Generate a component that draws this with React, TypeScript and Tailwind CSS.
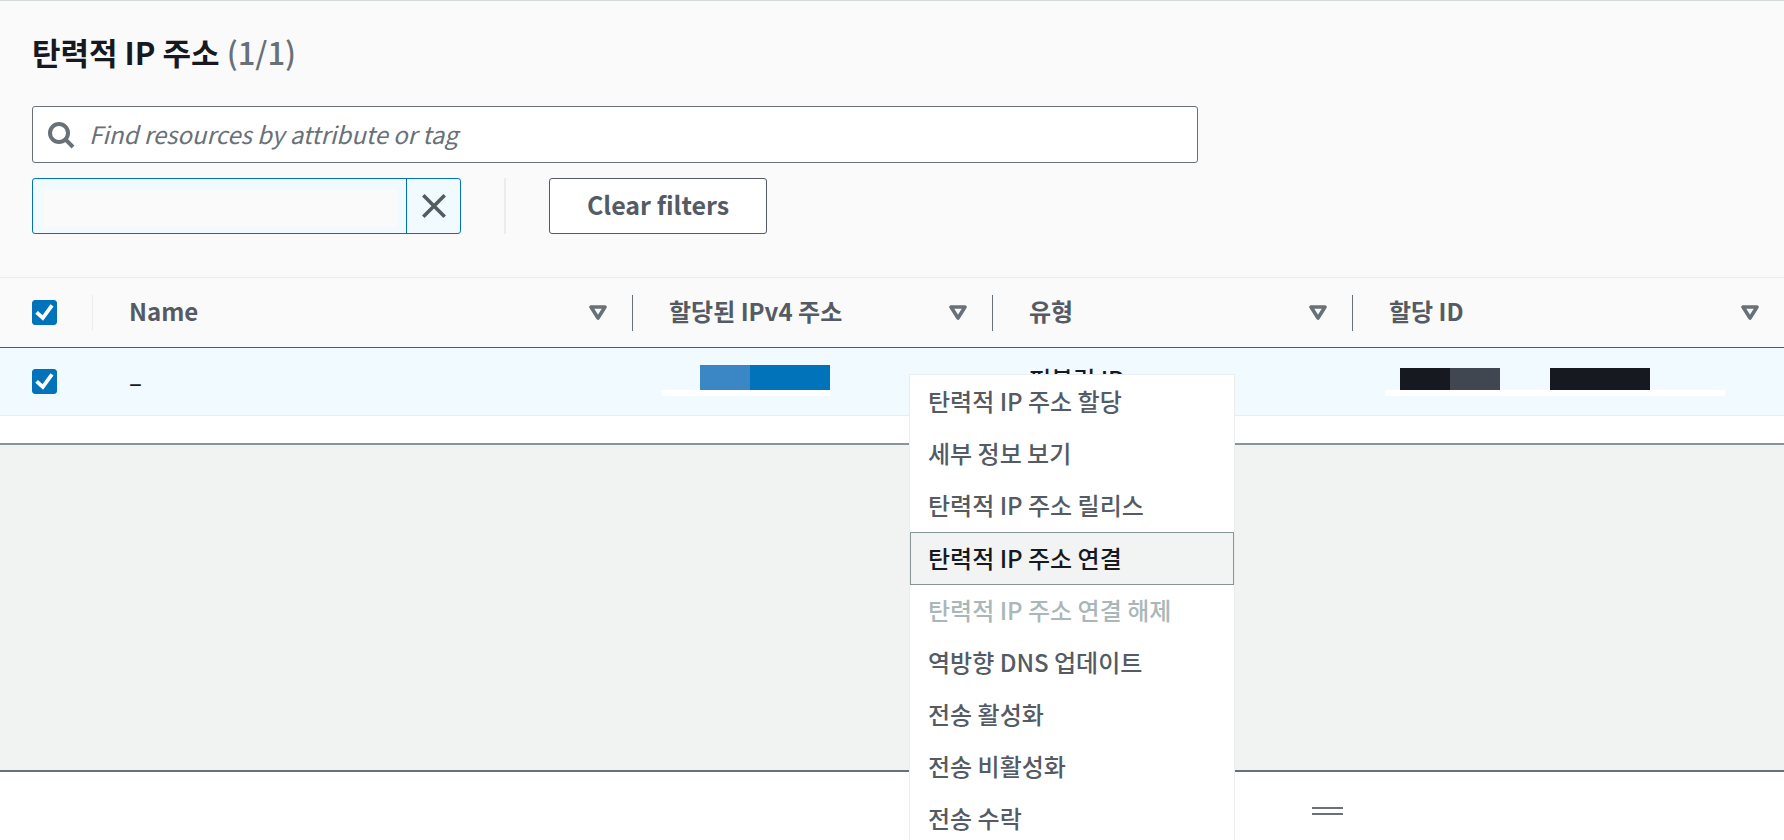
import React from "react";

const columns = ["Name", "할당된 IPv4 주소", "유형", "할당 ID"];

type MenuItem = { label: string; state?: "active" | "disabled" };

const menuItems: MenuItem[] = [
  { label: "탄력적 IP 주소 할당" },
  { label: "세부 정보 보기" },
  { label: "탄력적 IP 주소 릴리스" },
  { label: "탄력적 IP 주소 연결", state: "active" },
  { label: "탄력적 IP 주소 연결 해제", state: "disabled" },
  { label: "역방향 DNS 업데이트" },
  { label: "전송 활성화" },
  { label: "전송 비활성화" },
  { label: "전송 수락" },
];

function Checkbox({ label }: { label: string }) {
  return (
    <label className="grid size-[25px]">
      <input
        type="checkbox"
        defaultChecked
        aria-label={label}
        className="peer col-start-1 row-start-1 size-[25px] appearance-none rounded-[3px] border border-[#687078] bg-white checked:border-[#0073bb] checked:bg-[#0073bb]"
      />
      <svg
        viewBox="0 0 25 25"
        className="pointer-events-none invisible col-start-1 row-start-1 size-[25px] peer-checked:visible"
        fill="none"
        stroke="#fff"
        strokeWidth="3.8"
        aria-hidden="true"
      >
        <path d="M4.6 12.4 L10.8 18 L20 5.4" />
      </svg>
    </label>
  );
}

function SortIcon() {
  return (
    <svg viewBox="0 0 18 15" className="h-[15px] w-[18px]" fill="none" stroke="#687078" strokeWidth="3.6" strokeLinejoin="round" aria-hidden="true">
      <path d="M2 2 H16 L9 13 Z" />
    </svg>
  );
}

function HeaderCell({ title, last }: { title: string; last: boolean }) {
  return (
    <th scope="col" className="p-0 text-left font-bold">
      <div className={`flex h-9 items-center justify-between pl-9 pr-[25px] ${last ? "" : "border-r border-[#687078]"}`}>
        <span className="pb-[3px]">{title}</span>
        <button type="button" aria-label={`${title} 정렬`}>
          <SortIcon />
        </button>
      </div>
    </th>
  );
}

export default function App() {
  return (
    <div className="relative flex h-screen flex-col overflow-hidden border-t border-[#d5dbdb] bg-[#f1f3f3] font-['Noto_Sans_CJK_KR',sans-serif] text-2xl font-medium text-[#545b64]">
      <section className="border-b-2 border-[#879596] bg-white pb-[27px]">
        <header className="bg-[#fafafa] px-8 pb-[43px] pt-[30px]">
          <h1 className="text-[31px] font-bold leading-[42px] text-[#16191f]">
            탄력적 IP 주소 <span className="font-medium text-[#687078]">(1/1)</span>
          </h1>
          <label className="mt-[33px] flex h-[57px] w-full max-w-[1166px] items-center gap-[14px] rounded-[3px] border border-[#687078] bg-white pl-[14px]">
            <svg viewBox="0 0 28 28" className="size-7 shrink-0" fill="none" stroke="#687078" strokeWidth="4" aria-hidden="true">
              <circle cx="12" cy="12" r="9" />
              <path d="M18.4 18.4 L26 26" />
            </svg>
            <input
              type="text"
              aria-label="Find resources"
              placeholder="Find resources by attribute or tag"
              className="min-w-0 flex-1 bg-transparent pb-[2px] font-normal outline-none placeholder:italic placeholder:text-[#687078] placeholder:opacity-100"
            />
          </label>
          <div className="mt-[15px] flex h-14 items-stretch">
            <div className="flex w-[429px] rounded-[3px] border border-[#0073bb] bg-[#f1faff]">
              <div className="flex-1 pb-[6px] pl-[11px] pr-2 pt-[10px]">
                <div className="h-full bg-[#fafafa]" />
              </div>
              <button type="button" aria-label="Remove filter" className="flex w-[54px] items-center justify-center border-l border-[#0073bb]">
                <svg viewBox="0 0 24 24" className="size-6" fill="none" stroke="#545b64" strokeWidth="3.6" aria-hidden="true">
                  <path d="M1.3 1.3 L22.7 22.7 M22.7 1.3 L1.3 22.7" />
                </svg>
              </button>
            </div>
            <div className="ml-[43px] border-l-2 border-[#eaeded]" />
            <button type="button" className="ml-[43px] w-[218px] rounded-[3px] border border-[#545b64] bg-white pb-[2px] text-[25px] font-bold">
              Clear filters
            </button>
          </div>
        </header>

        <table className="w-full table-fixed border-collapse">
          <colgroup>
            <col className="w-[93px]" />
            <col className="w-[540px]" />
            <col className="w-[360px]" />
            <col className="w-[360px]" />
            <col />
          </colgroup>
          <thead>
            <tr className="h-[70px] border-b border-t border-b-[#0073bb] border-t-[#eaeded] bg-[#fafafa]">
              <th scope="col" className="p-0">
                <div className="flex h-9 items-center border-r border-[#eaeded] pl-8">
                  <Checkbox label="모두 선택" />
                </div>
              </th>
              {columns.map((title, i) => (
                <HeaderCell key={title} title={title} last={i === columns.length - 1} />
              ))}
            </tr>
          </thead>
          <tbody>
            <tr className="h-[68px] border-b border-[#eaeded] bg-[#f1faff] text-[#16191f]">
              <td className="p-0 pl-8">
                <Checkbox label="행 선택" />
              </td>
              <td className="p-0 pl-9">–</td>
              <td className="p-0 pb-[2px] pl-7">
                <div className="w-[169px] border-b-[6px] border-white pl-[39px]">
                  <div className="flex h-[25px]">
                    <div className="w-[50px] bg-[#3b87c6]" />
                    <div className="flex-1 bg-[#0073bb]" />
                  </div>
                </div>
              </td>
              <td className="p-0 pb-[5px] pl-9">퍼블릭 IP</td>
              <td className="p-0 pb-[2px] pl-8">
                <div className="flex w-[340px] border-b-[6px] border-white pl-[15px] pt-[3px]">
                  <div className="h-[22px] w-[50px] bg-[#16191f]" />
                  <div className="h-[22px] w-[50px] bg-[#414750]" />
                  <div className="ml-[50px] h-[22px] w-[100px] bg-[#16191f]" />
                </div>
              </td>
            </tr>
          </tbody>
        </table>
      </section>

      <div className="flex-1" />

      <section className="flex h-[70px] shrink-0 justify-center border-t-2 border-[#687078] bg-white">
        <button type="button" aria-label="패널 크기 조정" className="ml-[870px] mt-[35px] h-2 w-[31px] border-y-2 border-[#687078]" />
      </section>

      <ul role="menu" className="absolute left-[909px] top-[373px] w-[326px] border border-[#eaeded] bg-white pt-px">
        {menuItems.map(({ label, state }) => (
          <li key={label} role="none">
            <button
              type="button"
              role="menuitem"
              disabled={state === "disabled"}
              className={
                state === "active"
                  ? "block h-[53px] w-full border border-[#879596] bg-[#f2f3f3] px-[17px] pb-[2px] text-left text-[#16191f]"
                  : state === "disabled"
                    ? "block h-[52px] w-full px-[18px] pb-[2px] text-left text-[#aab7b8]"
                    : "block h-[52px] w-full px-[18px] pb-[2px] text-left"
              }
            >
              {label}
            </button>
          </li>
        ))}
      </ul>
    </div>
  );
}
